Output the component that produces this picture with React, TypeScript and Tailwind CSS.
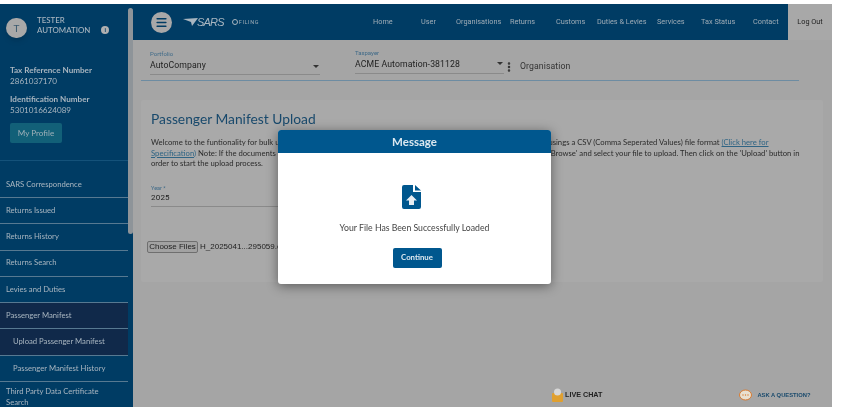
import { EllipsisVertical, Menu } from 'lucide-react'

const NAV_LINKS = [
  { label: 'Home', w: 'w-[48px]' },
  { label: 'User', w: 'w-[35px]' },
  { label: 'Organisations', w: 'w-[54px]' },
  { label: 'Returns', w: 'w-[46px]' },
  { label: 'Customs', w: 'w-[41px]' },
  { label: 'Duties & Levies', w: 'w-[60px]' },
  { label: 'Services', w: 'w-[44px]' },
  { label: 'Tax Status', w: 'w-[52px]' },
  { label: 'Contact', w: 'w-[35px]' },
]

const SIDE_ITEMS = [
  { label: 'SARS Correspondence' },
  { label: 'Returns Issued' },
  { label: 'Returns History' },
  { label: 'Returns Search' },
  { label: 'Levies and Duties' },
  { label: 'Passenger Manifest', active: true },
  { label: 'Upload Passenger Manifest', active: true, sub: true },
  { label: 'Passenger Manifest History', sub: true },
]

function Sidebar() {
  return (
    <aside className="relative flex h-full w-[133px] shrink-0 flex-col overflow-hidden bg-[#003c64] text-[#a9b6c0]">
      <div className="flex h-[47px] items-start pl-[6px] pt-[11px]">
        <div className="mt-[3px] flex h-[20px] w-[21px] items-center justify-center rounded-full bg-[#a8a8a8] text-[10px] text-[#3c5a70] shadow-md">T</div>
        <div className="ml-[10px] text-[7.9px] font-medium leading-[10px]">
          <div>TESTER</div>
          <div className="flex items-center">
            AUTOMATION
            <span className="ml-[11px] flex h-[8px] w-[8px] items-center justify-center rounded-full bg-[#b0b0b0] text-[6px] font-bold text-[#003c64]">i</span>
          </div>
        </div>
      </div>
      <div className="ml-[10px] mt-[15px] text-[8.1px] leading-[11px]">
        <div className="font-bold">Tax Reference Number</div>
        <div>2861037170</div>
        <div className="mt-[7px] font-bold">Identification Number</div>
        <div>5301016624089</div>
        <div className="mt-[7px] flex h-[20px] w-[52px] items-center justify-center rounded-[2px] bg-[#126078] text-[#9fb0b8]">My Profile</div>
      </div>
      <div className="mt-[17px] h-px w-[128px] bg-[#14527a]" />
      <ul className="mt-[10.5px] w-[128px] text-[7.7px]">
        {SIDE_ITEMS.map((item) => (
          <li
            key={item.label}
            className={`flex h-[26.3px] items-center whitespace-nowrap border-b border-[#577991] ${item.sub ? 'pl-[13px]' : 'pl-[6px]'} ${item.active ? 'bg-[#10294a]' : ''}`}
          >
            {item.label}
          </li>
        ))}
        <li className="w-[100px] pl-[6px] pt-[4px] leading-[10.5px]">Third Party Data Certificate Search</li>
      </ul>
      {/* scrollbar thumb */}
      <div className="absolute right-0 top-[4px] h-[226px] w-[5px] rounded-[3px] bg-[#8e9499]" />
    </aside>
  )
}

function Topbar() {
  return (
    <header className="flex h-[36px] shrink-0 items-center bg-[#003c64] font-['Roboto'] text-[7.3px] text-[#9eacb6]">
      <div className="ml-[18px] flex h-[21px] w-[21px] items-center justify-center rounded-full bg-[#a8a8a8]">
        <Menu size={13} strokeWidth={3} className="text-[#003c64]" />
      </div>
      <svg viewBox="0 0 15 8" className="ml-[11px] h-[8px] w-[15px]">
        <path d="M0 1 L15 0 L9 8 L8 4 Z" fill="#a9b6c0" />
      </svg>
      <span className="ml-[-1px] font-['Liberation_Sans'] text-[11px] italic tracking-[-0.8px] text-[#a9b6c0]">SARS</span>
      <span className="ml-[8px] h-[6px] w-[6px] rounded-full border border-[#a9b6c0]" />
      <span className="ml-px text-[5.5px] tracking-[0.6px]">FILING</span>
      <nav className="ml-[114px] flex items-center">
        {NAV_LINKS.map((link) => (
          <span key={link.label} className={`${link.w} whitespace-nowrap`}>{link.label}</span>
        ))}
      </nav>
      <div className="ml-auto flex h-full w-[44px] items-center justify-center whitespace-nowrap bg-[#a8a8a8] text-[#222]">Log Out</div>
    </header>
  )
}

function FilterRow() {
  return (
    <div className="ml-[8px] mr-[33px] flex h-[41px] items-start border-b border-[#6d8ca2] pl-[9px] font-['Roboto']">
      <div className="mt-[10px] w-[170px] border-b border-[#8a8a8a]">
        <div className="text-[6px] leading-[8px] text-[#3f6a88]">Portfolio</div>
        <div className="flex h-[16px] items-center justify-between text-[8.7px] tracking-[0.1px] text-[#222]">
          AutoCompany
          <span className="mr-px h-0 w-0 border-x-[3px] border-t-[3px] border-x-transparent border-t-[#333]" />
        </div>
      </div>
      <div className="ml-[35px] mt-[9px] w-[149px] border-b border-[#8a8a8a]">
        <div className="text-[6px] leading-[8px] text-[#3f6a88]">Taxpayer</div>
        <div className="flex h-[16px] items-center justify-between whitespace-nowrap text-[8.7px] tracking-[0.1px] text-[#222]">
          ACME Automation-381128
          <span className="mb-[4px] mr-px h-0 w-0 border-x-[3px] border-t-[3px] border-x-transparent border-t-[#333]" />
        </div>
      </div>
      <div className="ml-[-1px] mt-[20px] flex items-center text-[8.7px] tracking-[0.1px] text-[#333]">
        <EllipsisVertical size={12} strokeWidth={3} />
        <span className="ml-[5px]">Organisation</span>
      </div>
    </div>
  )
}

function UploadCard() {
  return (
    <section className="ml-[8px] mr-[9px] mt-[19px] h-[182px] rounded-[2px] bg-[#a9a9a9] px-[6px] pt-[9px]">
      <div className="pl-[4px]">
        <h1 className="text-[13.8px] leading-[20px] text-[#18496c]">Passenger Manifest Upload</h1>
        <p className="mt-[8px] w-[658px] text-[7.7px] leading-[10.6px] text-[#2b2b2b]">
          Welcome to the funtionality for bulk uploading of passenger manifest files and supporting documents to be submitted usings a CSV (Comma Seperated Values) file format{' '}
          <span className="text-[#2f6484] underline">(Click here for Specification)</span> Note: If the documents are ready for upload, please ensure that the format is correct and valid then click 'Browse' and select your file to upload. Then click on the 'Upload' button in order to start the upload process.
        </p>
        <div className="mt-[15px] w-[220px] border-b border-[#8a8a8a] pb-[2px] font-['Roboto']">
          <div className="text-[5.5px] leading-[8px] text-[#3f6a88]">Year *</div>
          <div className="text-[8px] leading-[12px] tracking-[0.2px] text-[#222]">2025</div>
        </div>
      </div>
      <div className="mt-[34px] flex items-center whitespace-nowrap font-['Liberation_Sans'] text-[8px] text-[#222]">
        <span className="flex h-[12px] w-[51px] items-center justify-center rounded-[2px] border border-[#6f6f6f] bg-[#a2a2a2] font-medium">Choose Files</span>
        <span className="ml-[2px]">H_2025041...295059.csv</span>
      </div>
    </section>
  )
}

function MessageModal() {
  return (
    <div className="absolute left-[278px] top-[130px] flex h-[154px] w-[273px] flex-col overflow-hidden rounded-[3px] bg-white shadow-[0_2px_12px_rgba(0,0,0,0.45)]">
      <div className="flex h-[23px] items-center justify-center bg-[#00578e] text-[11.5px] font-bold text-[#dce8f0]">Message</div>
      <div className="flex flex-1 flex-col items-center">
        <svg viewBox="0 0 19 24" className="mr-[6px] mt-[32px] h-[24px] w-[19px]">
          <path d="M2 0 H11 V7 H19 V22 A2 2 0 0 1 17 24 H2 A2 2 0 0 1 0 22 V2 A2 2 0 0 1 2 0 Z M13 0 L19 5.5 H13 Z" fill="#00578e" />
          <path d="M9.5 10 L15 15.5 H12 V20 H7 V15.5 H4 Z" fill="#e8eef3" />
        </svg>
        <p className="mt-[13px] text-[8.7px] leading-[11px] text-[#444]">Your File Has Been Successfully Loaded</p>
        <button className="ml-[5px] mt-[15px] flex h-[20px] w-[49px] items-center justify-center rounded-[2px] bg-[#00578e] text-[7.8px] font-bold text-[#dce8f0]">Continue</button>
      </div>
    </div>
  )
}

export default function App() {
  return (
    <div className="relative h-[407px] w-[842px] overflow-hidden bg-white font-['Lato'] blur-[0.35px]">
      <div className="flex h-[403px] w-[832px] translate-y-[4px] bg-[#a5a5a5]">
        <Sidebar />
        <main className="flex min-w-0 flex-1 flex-col">
          <Topbar />
          <FilterRow />
          <UploadCard />
          <div className="mt-auto flex h-[23px] items-center whitespace-nowrap pb-px pl-[419px] font-['Liberation_Sans']">
            <svg viewBox="0 0 11 14" className="h-[14px] w-[11px]">
              <rect x="0" y="5" width="11" height="9" rx="1" fill="#e0a030" />
              <circle cx="5.5" cy="4" r="3.5" fill="#d8d8d8" />
            </svg>
            <span className="ml-[2px] text-[7.2px] font-bold text-[#222]">LIVE CHAT</span>
            <svg viewBox="0 0 13 12" className="ml-[137px] h-[12px] w-[13px]">
              <ellipse cx="6.5" cy="6" rx="6" ry="5" fill="#e8e0d0" stroke="#d87a30" />
              <circle cx="4" cy="6" r="0.7" fill="#d87a30" />
              <circle cx="6.5" cy="6" r="0.7" fill="#d87a30" />
              <circle cx="9" cy="6" r="0.7" fill="#d87a30" />
            </svg>
            <span className="ml-[5px] text-[5.8px] font-bold text-[#18496c]">ASK A QUESTION?</span>
          </div>
        </main>
      </div>
      <MessageModal />
    </div>
  )
}
